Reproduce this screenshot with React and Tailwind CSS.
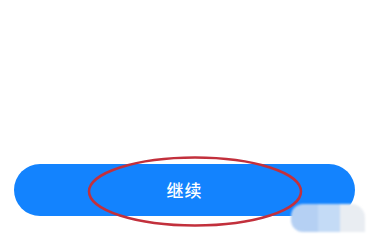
export default function App() {
  return (
    <div className="relative h-[236px] w-[367px] overflow-hidden bg-white flex flex-col justify-end px-[14px] pb-[20px] pr-[12px]">
      <button className="h-[52px] w-full rounded-full bg-[#1383fe] text-white text-[17px] font-medium font-['Noto_Sans_CJK_SC',sans-serif] tracking-[1px]">
        继续
      </button>

      {/* hand-drawn annotation */}
      <svg className="absolute left-0 top-0 pointer-events-none" width="367" height="236">
        <ellipse cx="195" cy="191.5" rx="106" ry="34" fill="none" stroke="#c2303c" strokeWidth="2.5" />
      </svg>

      {/* watermark */}
      <div className="absolute left-[291px] top-[204px] flex h-[28px] w-[74px] overflow-hidden rounded-l-[12px] rounded-tr-[14px] blur-[1px]">
        <div className="w-[27px] bg-[#b5d0f3]" />
        <div className="w-[22px] bg-[#c4dbf6]" />
        <div className="flex-1 bg-[#e9edf2]" />
      </div>
    </div>
  )
}
